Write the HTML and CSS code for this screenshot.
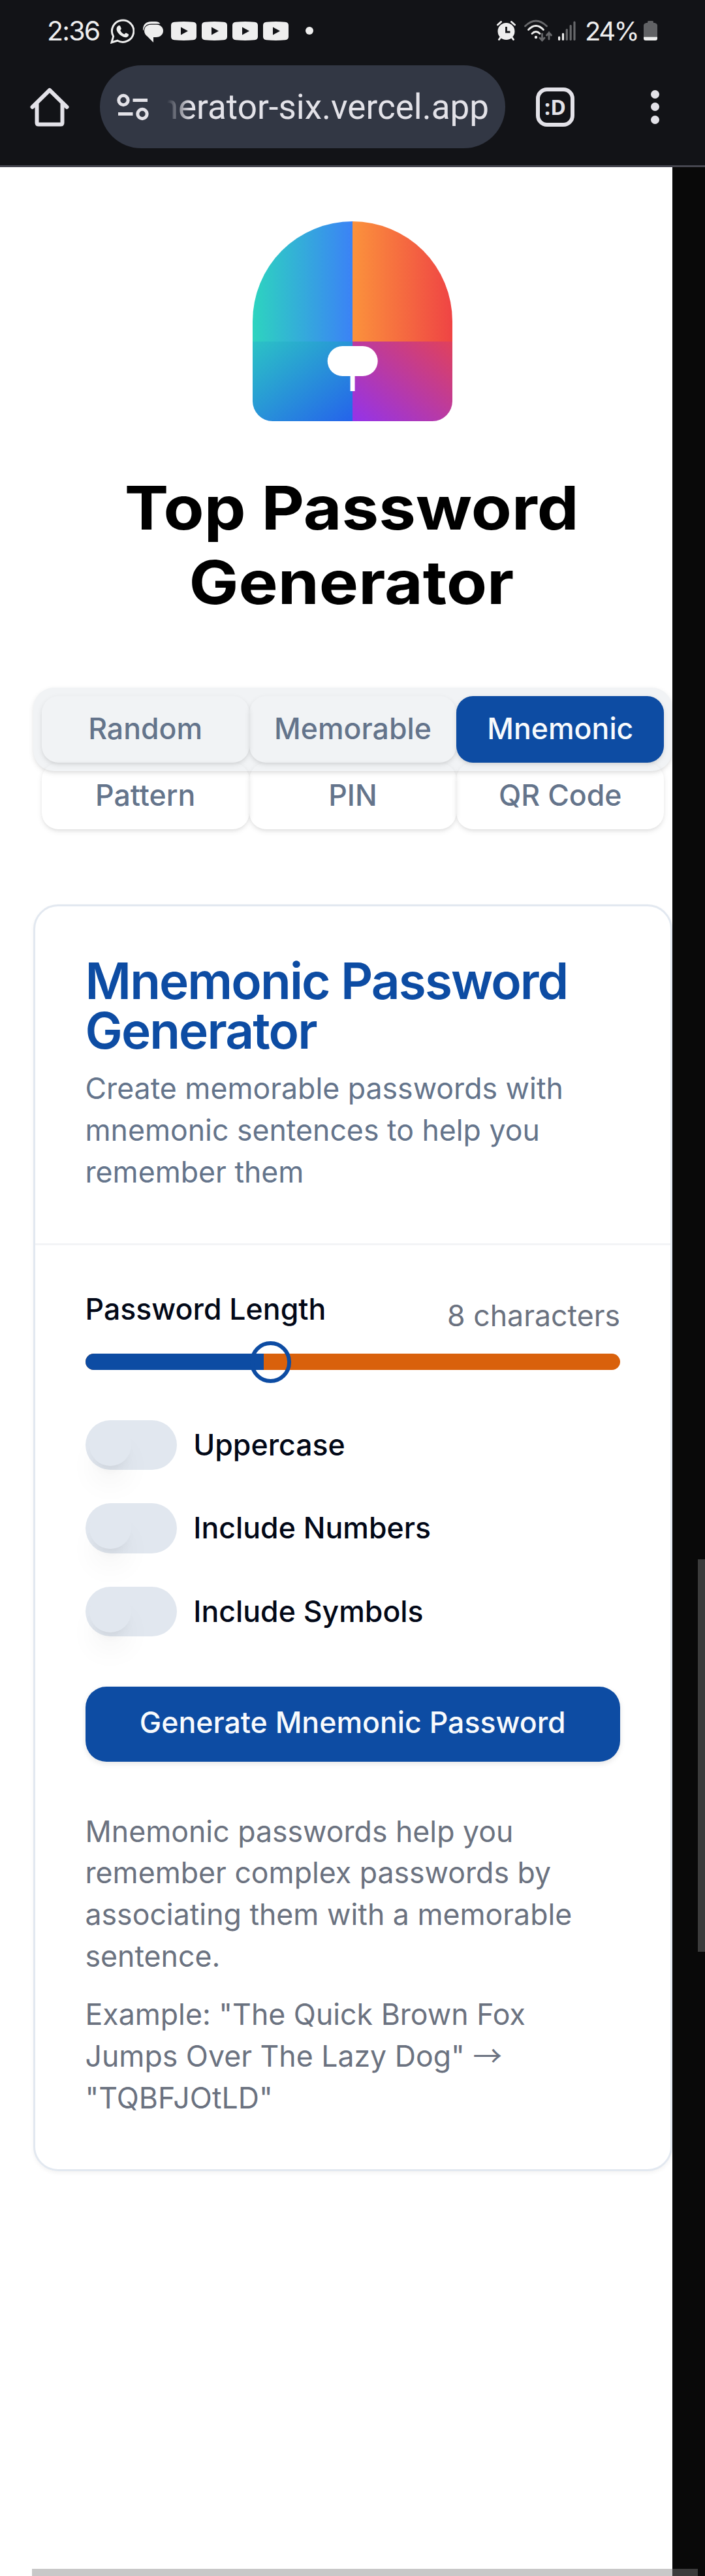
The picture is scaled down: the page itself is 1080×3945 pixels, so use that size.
FILE: index.html
```html
<!DOCTYPE html>
<html lang="en">
<head>
<meta charset="utf-8">
<title>Top Password Generator</title>
<link rel="stylesheet" href="styles.css">
</head>
<body>
<header class="chrome">
  <div class="status">
    <span class="time">2:36</span>
    <svg class="i-wa" width="37" height="38" viewBox="0 0 37 38" fill="none"><path d="M2 36l2.6-9.2A16.7 16.7 0 1 1 11 33.2z" stroke="#eee" stroke-width="3"/><path d="M12 10.500c1.500-1 3-.5 3.500 1l1.200 3c.3.8-.2 1.600-1.500 3 1.500 3 3.500 4.800 6.300 6 1.300-1.600 2-2.300 2.800-2l3.300 1.700c.8.4.6 2-.3 3.200-1.600 2-4.300 2.200-7.300 1-5-2-9-6-10.300-10.400-.6-2.500.5-5.100 2.300-6.500z" fill="#eee"/></svg>
    <svg class="i-chat" width="31" height="32" viewBox="0 0 31 32"><path d="M0 13C0 5 4 0 13 0h6c4 0 6.500 1.500 7.500 4H12C6 4 2 8 1.500 14z" fill="#eee"/><path d="M13 4.500h7c6 0 11 4 11 9.500S27 24 20 24h-4v8l-9-9c-3-2-5-5-5-9 0-6 5-9.500 11-9.500z" fill="#eee"/><path d="M1.500 14C2 7 6 4 13 4h14" fill="none" stroke="#121317"/></svg>
    <div class="videos">
      <svg width="39" height="29" viewBox="0 0 39 29"><path d="M5 .8Q19.500-.6 34 .8q5 .5 5 5v17.400q0 4.500-5 5-14.500 1.400-29 0-5-.5-5-5V5.800q0-4.500 5-5z" fill="#eee"/><path d="M15 8.500v12l11-6z" fill="#121317"/></svg>
      <svg width="39" height="29" viewBox="0 0 39 29"><path d="M5 .8Q19.500-.6 34 .8q5 .5 5 5v17.400q0 4.500-5 5-14.500 1.400-29 0-5-.5-5-5V5.800q0-4.500 5-5z" fill="#eee"/><path d="M15 8.500v12l11-6z" fill="#121317"/></svg>
      <svg width="39" height="29" viewBox="0 0 39 29"><path d="M5 .8Q19.500-.6 34 .8q5 .5 5 5v17.400q0 4.500-5 5-14.500 1.400-29 0-5-.5-5-5V5.800q0-4.500 5-5z" fill="#eee"/><path d="M15 8.500v12l11-6z" fill="#121317"/></svg>
      <svg width="39" height="29" viewBox="0 0 39 29"><path d="M5 .8Q19.500-.6 34 .8q5 .5 5 5v17.400q0 4.500-5 5-14.500 1.400-29 0-5-.5-5-5V5.800q0-4.500 5-5z" fill="#eee"/><path d="M15 8.500v12l11-6z" fill="#121317"/></svg>
    </div>
    <span class="more-dot"></span>
    <svg class="i-alarm" width="29" height="30" viewBox="0 0 29 30"><circle cx="14.500" cy="16" r="13" fill="#eee"/><path d="M1.500 6l5-4.500M27.500 6l-5-4.500M6 25l-2.500 3.500M23 25l2.500 3.500" stroke="#eee" stroke-width="3" stroke-linecap="round"/><path d="M14.500 9v8h6" fill="none" stroke="#121317" stroke-width="2.800"/></svg>
    <svg class="i-wifi" width="43" height="34" viewBox="0 0 43 34" fill="none" stroke-width="2.800" stroke-linecap="round"><path d="M1.500 10Q18-6 34.500 10" stroke="#67686b"/><path d="M6.500 15.500q11.500-12 23 0M12 21.500q6-6 12 0" stroke="#eee"/><circle cx="18" cy="27" r="2.200" fill="#eee"/><path d="M27.500 22v10m-3.500-4l3.500 4 3.500-4M38 30V20m-3.500 4l3.500-4 3.500 4" stroke="#67686b"/></svg>
    <svg class="i-signal" width="27" height="30" viewBox="0 0 27 30" stroke-width="3.200" stroke-linecap="round"><path d="M1.600 25v3.400M7.500 20v8.400" stroke="#eee"/><path d="M13.300 13.500v15M19.200 7.500v21M25 2v26.500" stroke="#67686b"/></svg>
    <span class="percent">24%</span>
    <svg class="i-batt" width="21" height="30" viewBox="0 0 21 30"><path d="M6 1.500Q6 0 7.500 0h6Q15 0 15 1.500V3h2q4 1 4 4v17.500H0V7q0-3 4-4h2z" fill="#616265"/><path d="M0 24.500h21V27q0 3-3 3H3q-3 0-3-3z" fill="#eee"/></svg>
  </div>
  <div class="toolbar">
    <svg class="i-home" width="60" height="60" viewBox="0 0 60 60" fill="none" stroke="#e3e2e8" stroke-width="6" stroke-linejoin="round" stroke-linecap="round"><path d="M3.500 30L30 4l26.500 26M10.500 25v29q0 2.500 2.500 2.500h34q2.500 0 2.500-2.500V25"/></svg>
    <div class="omnibox">
      <svg width="49" height="42" viewBox="0 0 49 42" fill="none" stroke="#e3e2e8" stroke-width="5"><circle cx="10" cy="10.500" r="7.200"/><path d="M24.500 10.500H47M2 31.500h22.500"/><circle cx="39" cy="31.500" r="7.200"/></svg>
      <div class="url"><span>nerator-six.vercel.app</span></div>
    </div>
    <div class="tabcount">:D</div>
    <div class="menu"><i></i><i></i><i></i></div>
  </div>
</header>
<div class="viewport">
<main class="page">
  <svg class="logo" width="306" height="306" viewBox="0 0 306 306">
    <defs>
      <linearGradient id="a"><stop stop-color="#2dd4bf"/><stop offset="1" stop-color="#3b82f6"/></linearGradient>
      <linearGradient id="b"><stop stop-color="#fb923c"/><stop offset="1" stop-color="#ef4444"/></linearGradient>
      <linearGradient id="c" x2="1" y2="1"><stop stop-color="#2bc3c5"/><stop offset="1" stop-color="#2563eb"/></linearGradient>
      <linearGradient id="d" y1="1" x2="1" y2="0"><stop stop-color="#9333ea"/><stop offset="1" stop-color="#e0415b"/></linearGradient>
      <clipPath id="shape"><path d="M0 153a153 153 0 0 1 306 0v122.400a30.600 30.600 0 0 1-30.600 30.600H30.600A30.600 30.600 0 0 1 0 275.400z"/></clipPath>
    </defs>
    <g clip-path="url(#shape)">
      <path fill="url(#a)" d="M0 0h153v184H0z"/><path fill="url(#b)" d="M153 0h153v184H153z"/>
      <path fill="url(#c)" d="M0 184h153v122H0z"/><path fill="url(#d)" d="M153 184h153v122H153z"/>
    </g>
    <rect x="114.700" y="191" width="77" height="46" rx="23" fill="#fff"/><path fill="#fff" d="M149.600 230h7v30h-7z"/>
  </svg>
  <h1><span class="line-one">Top Password</span><span class="line-two">Generator</span></h1>
  <nav class="tabs">
    <button>Random</button><button>Memorable</button><button class="active">Mnemonic</button>
    <button>Pattern</button><button>PIN</button><button>QR Code</button>
  </nav>
  <section class="card">
    <div class="card-head">
      <h2>Mnemonic Password Generator</h2>
      <p>Create memorable passwords with mnemonic sentences to help you remember them</p>
    </div>
    <div class="card-body">
      <div class="length"><label>Password Length</label><span>8 characters</span></div>
      <div class="slider"><div class="range" style="width:33.33%"></div><div class="knob"></div></div>
      <div class="options">
        <div class="option"><span class="switch"><i></i></span><label>Uppercase</label></div>
        <div class="option"><span class="switch"><i></i></span><label>Include Numbers</label></div>
        <div class="option"><span class="switch"><i></i></span><label>Include Symbols</label></div>
      </div>
      <button class="generate">Generate Mnemonic Password</button>
      <div class="notes">
        <p>Mnemonic passwords help you remember complex passwords by associating them with a memorable sentence.</p>
        <p>Example: "The Quick Brown Fox Jumps Over The Lazy Dog" <span class="arrow">→</span> "TQBFJOtLD"</p>
      </div>
    </div>
  </section>
</main>
<div class="scroll-y"></div>
<div class="scroll-x"></div>
</div>
</body>
</html>
```
FILE: styles.css
```css
* { box-sizing: border-box; margin: 0; padding: 0; }
body { width: 1080px; height: 3945px; background: #090909; font-family: Inter, "Liberation Sans", sans-serif; overflow: hidden; }
svg { display: block; flex: none; }
button { border: 0; background: none; font: inherit; }

.chrome { height: 256px; background: #121317; border-bottom: 3px solid #45454f; }
.status { height: 100px; padding: 29px 0 0 72px; display: flex; align-items: flex-start; color: #eee; }
.time, .percent { font-size: 41px; line-height: 36px; white-space: nowrap; flex: none; }
.time { width: 97px; letter-spacing: -1.8px; }
.i-chat { margin: 4px 0 0 13px; }
.videos { display: flex; gap: 8px; margin: 4px 0 0 12px; }
.more-dot { width: 12px; height: 12px; border-radius: 50%; background: #eee; margin: 12px 0 0 26px; }
.i-alarm { margin: 3px 0 0 281px; }
.i-wifi { margin: 1px 0 0 13px; }
.i-signal { margin: 3px 0 0 9px; }
.percent { width: 90px; margin: 1px 0 0 14px; font-size: 40px; letter-spacing: -2.6px; }
.i-batt { margin-top: 3px; }

.toolbar { display: flex; align-items: center; height: 127px; padding-left: 46px; }
.omnibox { margin-left: 47px; width: 621px; height: 127px; border-radius: 64px; background: #323744; display: flex; align-items: center; padding-left: 26px; }
.url { margin-left: 20px; width: 501px; height: 80px; display: flex; justify-content: flex-end; font: 53px/80px Roboto, sans-serif; color: #e3e2e8; white-space: nowrap; -webkit-mask-image: linear-gradient(90deg, transparent 8px, #000 44px); mask-image: linear-gradient(90deg, transparent 8px, #000 44px); }
.tabcount { margin-left: 47px; width: 59px; height: 60px; border: 6.5px solid #e3e2e8; border-radius: 17px; color: #e3e2e8; font: 700 32px/47px "Open Sans", sans-serif; text-align: center; }
.menu { margin-left: 117px; display: flex; flex-direction: column; gap: 6.5px; }
.menu i { width: 13px; height: 13px; border-radius: 50%; background: #e3e2e8; }

.viewport { position: relative; height: 3689px; }
.page { width: 1030px; height: 3689px; background: #fff; padding: 83px 0 0 51px; overflow: hidden; }
.logo { margin-left: 336px; }
h1 { margin-top: 75px; height: 228px; width: 975px; display: flex; flex-direction: column; align-items: center; font-size: 92.500px; line-height: 114px; font-weight: 700; color: #000; }
h1 span { white-space: nowrap; transform: scaleX(1.095); }

.tabs { margin-top: 105px; width: 979px; height: 128px; padding: 12.750px; border-radius: 32px; background: #f1f3f5; display: grid; grid-template-columns: repeat(3, 1fr); grid-auto-rows: 102px; box-shadow: 0 3px 9px rgba(0,0,0,.09), 0 3px 6px -3px rgba(0,0,0,.1); }
.tabs button { padding-bottom: 1px; border-radius: 25.500px; color: #64748b; font-size: 44.600px; line-height: 64px; font-weight: 500; box-shadow: 0 3px 9px rgba(0,0,0,.09), 0 3px 6px -3px rgba(0,0,0,.1); }
.tabs .active { background: #0d4ca3; color: #f8fafc; }

.card { margin-top: 204px; width: 979px; border: 3px solid #e2e8f0; border-radius: 38px; background: #fff; box-shadow: 0 3px 6px rgba(0,0,0,.05); font-size: 44.625px; line-height: 63.750px; }
.card-head { padding: 75.500px 76.500px 77px; border-bottom: 3px solid #f3f4f6; }
h2 { color: #0d4ca3; font-size: 76.500px; line-height: 76.500px; font-weight: 600; letter-spacing: -1.912px; }
.card-head p { margin-top: 19.500px; color: #64748b; }
.card-body { padding: 76.500px 77px 76.500px 76.500px; color: #020817; }
.length { display: flex; justify-content: space-between; align-items: flex-start; }
.length label { font-weight: 500; line-height: 43.600px; }
.length span { color: #6b7280; line-height: 63px; }
.slider { position: relative; margin-top: 26px; height: 25.500px; border-radius: 13px; background: #d9610c; }
.range { height: 100%; background: #0d4ca3; border-radius: 13px 0 0 13px; }
.knob { position: absolute; left: 252px; top: -19px; width: 63.750px; height: 63.750px; border: 6px solid #0d4ca3; border-radius: 50%; }
.options { display: flex; flex-direction: column; gap: 51px; margin-top: 76.500px; }
.option { display: flex; align-items: center; gap: 25.500px; height: 76.500px; font-weight: 500; }
.option label { line-height: 44.600px; }
.switch { width: 140.250px; height: 76.500px; border-radius: 39px; background: #e1e7ef; padding: 6.400px; }
.switch i { display: block; width: 63.750px; height: 63.750px; border-radius: 50%; background: #e1e7ef; box-shadow: 0 32px 48px -9.500px rgba(0,0,0,.07), 0 13px 19px -13px rgba(0,0,0,.1); }
.generate { display: block; width: 100%; height: 114.750px; margin-top: 76.500px; padding-bottom: 2px; border-radius: 32px; background: #0d4ca3; color: #f8fafc; font-weight: 500; box-shadow: 0 3px 9px rgba(0,0,0,.1); }
.notes { margin-top: 76px; display: flex; flex-direction: column; gap: 25.500px; color: #6b7280; }
.arrow { font-family: "Noto Sans CJK JP", sans-serif; line-height: 1; font-weight: 400; }

.scroll-y, .scroll-x { position: absolute; background: rgba(126,126,126,.427); }
.scroll-y { left: 1069px; top: 2132px; width: 11px; height: 601px; }
.scroll-x { left: 49px; top: 3678px; width: 1020px; height: 11px; }
```
